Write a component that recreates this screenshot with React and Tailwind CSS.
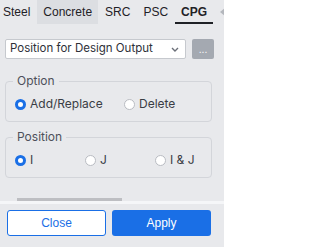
import { useState } from "react";

const Radio = ({ checked, label, onClick, className = "" }) => (
  <label onClick={onClick} className={`flex items-center gap-[4px] cursor-pointer ${className}`}>
    <span
      className={`w-[11px] h-[11px] rounded-full box-border ${
        checked ? "border-[3px] border-[#1a6fe6] bg-white" : "border border-[#b9bcc2] bg-white"
      }`}
    />
    <span className="text-[12px] leading-[14px] text-[#3a3d45]">{label}</span>
  </label>
);

const Group = ({ title, children }) => (
  <fieldset className="border border-[#d3d5da] rounded-[4px] pl-[9px] pt-[9px] pb-[10px]">
    <legend className="-ml-[2px] px-[4px] text-[12px] leading-[14px] text-[#4d505a]">{title}</legend>
    <div className="flex items-center">{children}</div>
  </fieldset>
);

export default function App() {
  const [tab, setTab] = useState("CPG");
  const [option, setOption] = useState("add");
  const [pos, setPos] = useState("I");

  const tabs = ["Steel", "Concrete", "SRC", "PSC", "CPG"];

  return (
    <div
      className="w-[224px] h-[247px] bg-[#e8e9ec] overflow-hidden flex flex-col"
      style={{ fontFamily: "Inter, 'Liberation Sans', sans-serif" }}
    >
      {/* Tabs */}
      <div className="flex h-[24px] items-stretch -ml-[3px] font-['Liberation_Sans',Arial,sans-serif]">
        {tabs.map((t) => (
          <button
            key={t}
            onClick={() => setTab(t)}
            className={`px-[6px] mr-[1px] text-[12px] text-[#1f2126] ${
              t === "Concrete" ? "bg-[#dcdee2]" : ""
            } ${t === tab ? "font-bold border-b-2 border-[#1f2126] pt-[2px]" : ""}`}
          >
            {t}
          </button>
        ))}
        <div className="ml-[3px] w-px bg-[#dfe1e4]" />
        <div className="flex items-center pl-[3px]">
          <svg width="5" height="8" viewBox="0 0 5 8">
            <path d="M5 0v8L0 4z" fill="#b4b7bd" />
          </svg>
        </div>
      </div>

      {/* Select */}
      <div className="flex mt-[15px] px-[5px] gap-[6px]">
        <div className="w-[181px] h-[20px] bg-white border border-[#c6c9ce] rounded-[2px] flex items-center justify-between pl-[4px] pr-[6px]">
          <span className="text-[11.5px] text-[#2e3038]">Position for Design Output</span>
          <svg width="8" height="5" viewBox="0 0 8 5" fill="none">
            <path d="M1 1l3 3 3-3" stroke="#6b6f78" strokeWidth="1.4" />
          </svg>
        </div>
        <button className="w-[22px] h-[20px] bg-[#a4a9b1] rounded-[2px] text-white text-[10px] leading-[10px]">...</button>
      </div>

      {/* Option */}
      <div className="mt-[15px] px-[5px] w-[217px]">
        <Group title="Option">
          <Radio className="w-[109px]" checked={option === "add"} label="Add/Replace" onClick={() => setOption("add")} />
          <Radio checked={option === "del"} label="Delete" onClick={() => setOption("del")} />
        </Group>
      </div>

      {/* Position */}
      <div className="mt-[8px] px-[5px] w-[217px]">
        <Group title="Position">
          <Radio className="w-[70px]" checked={pos === "I"} label="I" onClick={() => setPos("I")} />
          <Radio className="w-[70px]" checked={pos === "J"} label="J" onClick={() => setPos("J")} />
          <Radio checked={pos === "IJ"} label="I & J" onClick={() => setPos("IJ")} />
        </Group>
      </div>

      {/* Scrollbar */}
      <div className="mt-[20px] ml-[17px] w-[105px] h-[3px] bg-[#bdbec2]" />
      <div className="h-[3px] bg-[#f5f6f8]" />

      {/* Footer */}
      <div className="flex gap-[6px] px-[7px] pt-[6px] font-['Liberation_Sans',Arial,sans-serif]">
        <button className="w-[99px] h-[26px] bg-white border border-[#1a6fe6] rounded-[3px] text-[12px] text-[#1a6fe6]">
          Close
        </button>
        <button className="w-[99px] h-[26px] bg-[#1a6fe6] rounded-[3px] text-[12px] text-white">Apply</button>
      </div>
    </div>
  );
}
